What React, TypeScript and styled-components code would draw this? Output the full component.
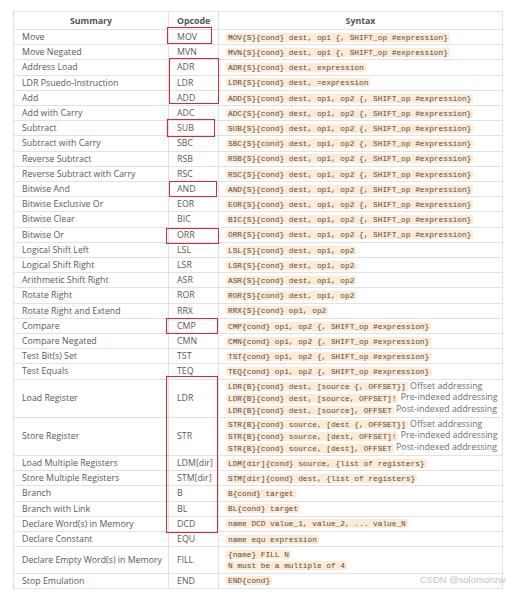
import React from "react";
import styled, { createGlobalStyle } from "styled-components";

const GlobalStyle = createGlobalStyle`
  html, body { margin: 0; padding: 0; background: #ffffff; }
  body { overflow: hidden; width: 506px; height: 593px; }
  #root { width: 506px; height: 593px; }
`;

const Page = styled.div`
  position: relative;
  width: 506px;
  height: 593px;
  padding: 11px 4px 0 13px;
  box-sizing: border-box;
  font-family: "Open Sans", "Noto Sans", sans-serif;
`;

const Table = styled.table`
  width: 489px;
  table-layout: fixed;
  border-collapse: collapse;
  color: #5a5a5a;
  font-size: 8.8px;
`;

const HeadCell = styled.th<{ $w: number }>`
  width: ${(p) => p.$w}px;
  height: 18px;
  border: 1px solid #e2e2e2;
  padding: 0 8px;
  line-height: 12px;
  font-weight: 700;
  color: #555555;
  text-align: center;
  box-sizing: border-box;
`;

const Cell = styled.td`
  border: 1px solid #e2e2e2;
  padding: 1px 8px;
  line-height: 12.2px;
  white-space: nowrap;
  vertical-align: middle;
`;

const SyntaxCell = styled.td`
  border: 1px solid #e2e2e2;
  padding: 1px 7px;
  line-height: 11.7px;
  white-space: nowrap;
  vertical-align: middle;
`;

const Code = styled.code`
  font-family: "Liberation Mono", "DejaVu Sans Mono", monospace;
  font-size: 7.8px;
  line-height: 1;
  color: #5a4a40;
  background: #fdebd6;
  padding: 0.5px 2px;
  border-radius: 2px;
`;

const Note = styled.span`
  color: #687078;
  font-size: 8.8px;
  line-height: 1;
`;

const Mark = styled.div<{ $x: number; $y: number; $w: number; $h: number }>`
  position: absolute;
  left: ${(p) => p.$x}px;
  top: ${(p) => p.$y}px;
  width: ${(p) => p.$w}px;
  height: ${(p) => p.$h}px;
  border: 1.5px solid #e3252e;
  box-sizing: border-box;
  pointer-events: none;
`;

const Watermark = styled.div`
  position: absolute;
  left: 420px;
  top: 574px;
  font-family: "Liberation Sans", Arial, sans-serif;
  font-size: 9.4px;
  color: #c4c4c4;
  white-space: nowrap;
`;

type Row = { s: string; o: string; c: string[]; n?: string[] };

const shift = " {, SHIFT_op #expression}";

const rows: Row[] = [
  { s: "Move", o: "MOV", c: ["MOV{S}{cond} dest, op1" + shift] },
  { s: "Move Negated", o: "MVN", c: ["MVN{S}{cond} dest, op1" + shift] },
  { s: "Address Load", o: "ADR", c: ["ADR{S}{cond} dest, expression"] },
  { s: "LDR Psuedo-Instruction", o: "LDR", c: ["LDR{S}{cond} dest, =expression"] },
  { s: "Add", o: "ADD", c: ["ADD{S}{cond} dest, op1, op2" + shift] },
  { s: "Add with Carry", o: "ADC", c: ["ADC{S}{cond} dest, op1, op2" + shift] },
  { s: "Subtract", o: "SUB", c: ["SUB{S}{cond} dest, op1, op2" + shift] },
  { s: "Subtract with Carry", o: "SBC", c: ["SBC{S}{cond} dest, op1, op2" + shift] },
  { s: "Reverse Subtract", o: "RSB", c: ["RSB{S}{cond} dest, op1, op2" + shift] },
  { s: "Reverse Subtract with Carry", o: "RSC", c: ["RSC{S}{cond} dest, op1, op2" + shift] },
  { s: "Bitwise And", o: "AND", c: ["AND{S}{cond} dest, op1, op2" + shift] },
  { s: "Bitwise Exclusive Or", o: "EOR", c: ["EOR{S}{cond} dest, op1, op2" + shift] },
  { s: "Bitwise Clear", o: "BIC", c: ["BIC{S}{cond} dest, op1, op2" + shift] },
  { s: "Bitwise Or", o: "ORR", c: ["ORR{S}{cond} dest, op1, op2" + shift] },
  { s: "Logical Shift Left", o: "LSL", c: ["LSL{S}{cond} dest, op1, op2"] },
  { s: "Logical Shift Right", o: "LSR", c: ["LSR{S}{cond} dest, op1, op2"] },
  { s: "Arithmetic Shift Right", o: "ASR", c: ["ASR{S}{cond} dest, op1, op2"] },
  { s: "Rotate Right", o: "ROR", c: ["ROR{S}{cond} dest, op1, op2"] },
  { s: "Rotate Right and Extend", o: "RRX", c: ["RRX{S}{cond} op1, op2"] },
  { s: "Compare", o: "CMP", c: ["CMP{cond} op1, op2" + shift] },
  { s: "Compare Negated", o: "CMN", c: ["CMN{cond} op1, op2" + shift] },
  { s: "Test Bit(s) Set", o: "TST", c: ["TST{cond} op1, op2" + shift] },
  { s: "Test Equals", o: "TEQ", c: ["TEQ{cond} op1, op2" + shift] },
  {
    s: "Load Register",
    o: "LDR",
    c: [
      "LDR{B}{cond} dest, [source {, OFFSET}]",
      "LDR{B}{cond} dest, [source, OFFSET]!",
      "LDR{B}{cond} dest, [source], OFFSET",
    ],
    n: ["Offset addressing", "Pre-indexed addressing", "Post-indexed addressing"],
  },
  {
    s: "Store Register",
    o: "STR",
    c: [
      "STR{B}{cond} source, [dest {, OFFSET}]",
      "STR{B}{cond} source, [dest, OFFSET]!",
      "STR{B}{cond} source, [dest], OFFSET",
    ],
    n: ["Offset addressing", "Pre-indexed addressing", "Post-indexed addressing"],
  },
  { s: "Load Multiple Registers", o: "LDM[dir]", c: ["LDM[dir]{cond} source, {list of registers}"] },
  { s: "Store Multiple Registers", o: "STM[dir]", c: ["STM[dir]{cond} dest, {list of registers}"] },
  { s: "Branch", o: "B", c: ["B{cond} target"] },
  { s: "Branch with Link", o: "BL", c: ["BL{cond} target"] },
  { s: "Declare Word(s) in Memory", o: "DCD", c: ["name DCD value_1, value_2, ... value_N"] },
  { s: "Declare Constant", o: "EQU", c: ["name equ expression"] },
  { s: "Declare Empty Word(s) in Memory", o: "FILL", c: ["{name} FILL N", "N must be a multiple of 4"] },
  { s: "Stop Emulation", o: "END", c: ["END{cond}"] },
];

const marks = [
  { x: 167, y: 27, w: 45, h: 17 },
  { x: 169, y: 58, w: 50, h: 46 },
  { x: 167, y: 119, w: 48, h: 18 },
  { x: 169, y: 181, w: 48, h: 16 },
  { x: 166, y: 228, w: 53, h: 16 },
  { x: 166, y: 318, w: 52, h: 16 },
  { x: 166, y: 376, w: 52, h: 157 },
];

export default function App() {
  return (
    <>
      <GlobalStyle />
      <Page>
        <Table>
          <thead>
            <tr>
              <HeadCell $w={155}>Summary</HeadCell>
              <HeadCell $w={50}>Opcode</HeadCell>
              <HeadCell $w={284}>Syntax</HeadCell>
            </tr>
          </thead>
          <tbody>
            {rows.map((r, i) => (
              <tr key={i}>
                <Cell>{r.s}</Cell>
                <Cell>{r.o}</Cell>
                <SyntaxCell>
                  {r.c.map((line, j) => (
                    <React.Fragment key={j}>
                      {j > 0 && <br />}
                      <Code>{line}</Code>
                      {r.n && <Note> {r.n[j]}</Note>}
                    </React.Fragment>
                  ))}
                </SyntaxCell>
              </tr>
            ))}
          </tbody>
        </Table>
        {marks.map((m, i) => (
          <Mark key={i} $x={m.x} $y={m.y} $w={m.w} $h={m.h} />
        ))}
        <Watermark>CSDN @solomonzw</Watermark>
      </Page>
    </>
  );
}
